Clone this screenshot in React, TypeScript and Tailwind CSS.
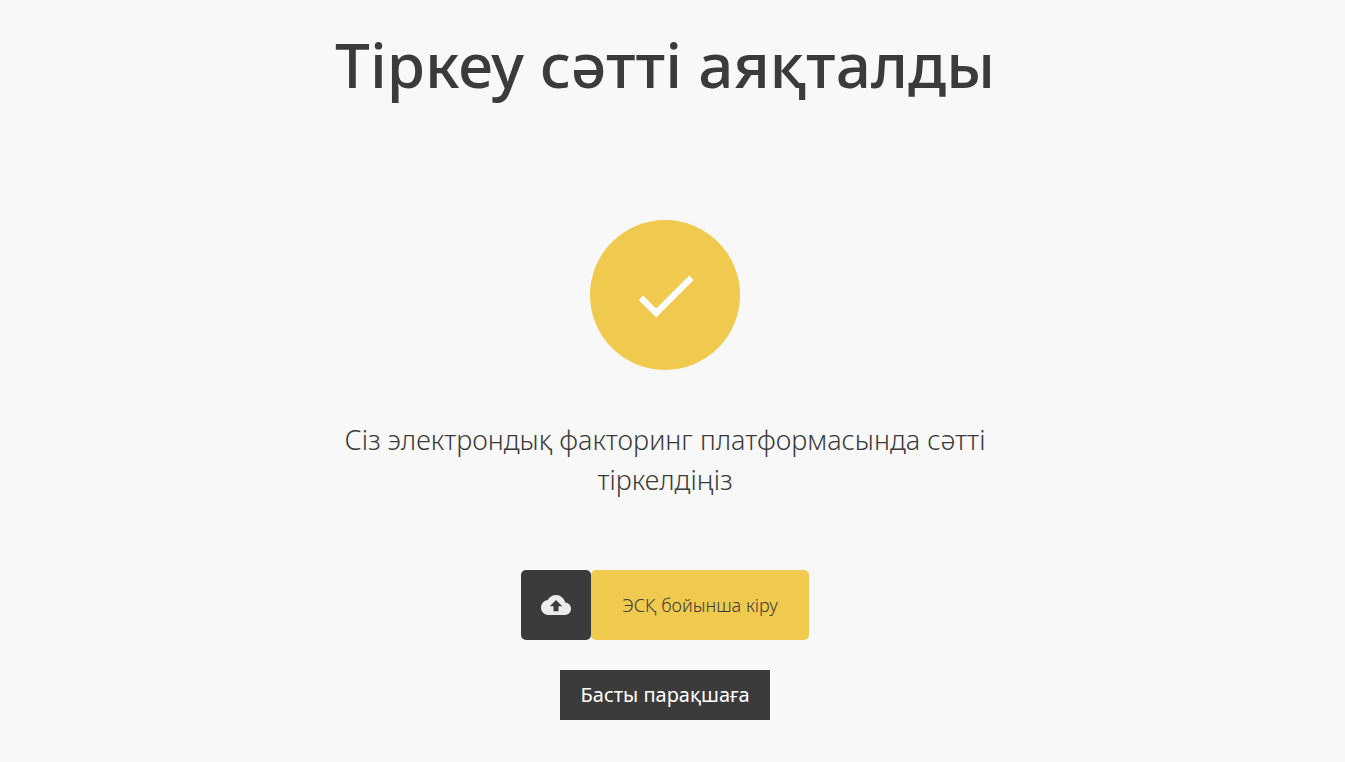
import { MdCheck, MdCloudUpload } from "react-icons/md";

export default function App() {
  return (
    <main className="flex min-h-screen flex-col items-center bg-[#f8f8f8] pr-[15px] pb-10 font-['Noto_Sans','Open_Sans',sans-serif] text-[#3b3b3b]">
      <h1 className="pt-4 text-center text-[62px] leading-[96px] font-medium">
        Тіркеу сәтті аяқталды
      </h1>
      <div className="mt-[108px] flex size-[150px] items-center justify-center rounded-full bg-[#efca4e] text-white">
        <MdCheck className="size-[75px]" aria-hidden="true" />
      </div>
      <p className="mt-[50px] max-w-[670px] text-center text-[27px] leading-10 font-light">
        Сіз электрондық факторинг платформасында сәтті тіркелдіңіз
      </p>
      <button
        type="button"
        className="mt-[70px] flex h-[70px] text-lg font-light"
      >
        <span className="flex size-[70px] items-center justify-center rounded-[5px] bg-[#3b3b3b] text-[#ececec]">
          <MdCloudUpload className="size-[30px]" aria-hidden="true" />
        </span>
        <span className="flex h-full min-w-[218px] items-center justify-center rounded-[5px] bg-[#efca4e] px-5">
          ЭСҚ бойынша кіру
        </span>
      </button>
      <a
        href="#"
        className="mt-[30px] flex h-[50px] min-w-[210px] items-center justify-center bg-[#3b3b3b] px-5 text-xl text-white"
      >
        Басты парақшаға
      </a>
    </main>
  );
}
